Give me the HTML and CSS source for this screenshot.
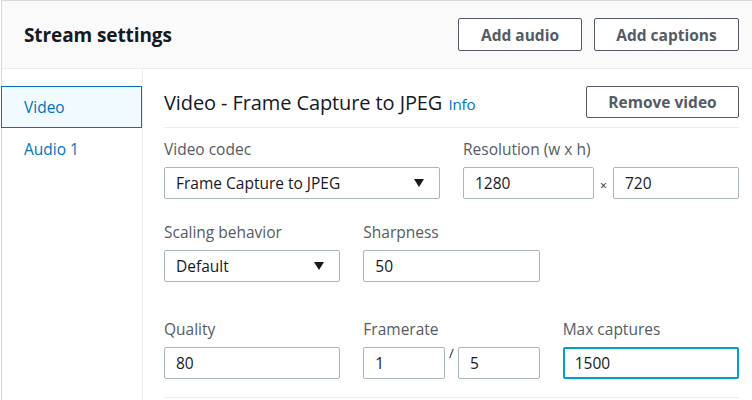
FILE: index.html
```html
<!DOCTYPE html>
<html lang="en">
<head>
<meta charset="utf-8">
<title>Stream settings</title>
<link rel="stylesheet" href="styles.css">
</head>
<body>
<div class="panel">
  <div class="panel-header">
    <h2 class="panel-title">Stream settings</h2>
    <div class="header-actions">
      <button class="btn btn-audio">Add audio</button>
      <button class="btn btn-captions">Add captions</button>
    </div>
  </div>
  <div class="panel-body">
    <nav class="sidebar">
      <div class="tab tab-active">Video</div>
      <div class="tab">Audio 1</div>
    </nav>
    <section class="content">
      <div class="section-head">
        <h3 class="section-title">Video - Frame Capture to JPEG <a class="info">Info</a></h3>
        <button class="btn btn-remove">Remove video</button>
      </div>
      <div class="row row-two">
        <div class="field">
          <label class="label">Video codec</label>
          <div class="control select">
            <span>Frame Capture to JPEG</span>
            <svg class="caret" width="10" height="8" viewBox="0 0 10 8"><polygon points="0,0 10,0 5,8" fill="#16191f"/></svg>
          </div>
        </div>
        <div class="field">
          <label class="label">Resolution (w x h)</label>
          <div class="pair pair-res">
            <div class="control input">1280</div>
            <span class="times">×</span>
            <div class="control input">720</div>
          </div>
        </div>
      </div>
      <div class="row row-three row-mid">
        <div class="field">
          <label class="label">Scaling behavior</label>
          <div class="control select">
            <span>Default</span>
            <svg class="caret" width="10" height="8" viewBox="0 0 10 8"><polygon points="0,0 10,0 5,8" fill="#16191f"/></svg>
          </div>
        </div>
        <div class="field">
          <label class="label">Sharpness</label>
          <div class="control input">50</div>
        </div>
      </div>
      <div class="row row-three row-last">
        <div class="field">
          <label class="label">Quality</label>
          <div class="control input">80</div>
        </div>
        <div class="field">
          <label class="label">Framerate</label>
          <div class="pair pair-rate">
            <div class="control input">1</div>
            <span class="slash">/</span>
            <div class="control input">5</div>
          </div>
        </div>
        <div class="field">
          <label class="label">Max captures</label>
          <div class="control input focused">1500</div>
        </div>
      </div>
    </section>
  </div>
</div>
</body>
</html>
```
FILE: styles.css
```css
* { box-sizing: border-box; }
html, body { margin: 0; padding: 0; background: #ffffff; }
body {
  font-family: "Open Sans", "Noto Sans", sans-serif;
  color: #16191f;
  width: 752px;
  height: 400px;
  overflow: hidden;
}
.panel {
  margin-left: 1px;
  border-top: 1px solid #d5dbdb;
  border-left: 1px solid #d5dbdb;
}
.panel-header {
  height: 68px;
  background: #fafafa;
  border-bottom: 1px solid #eaeded;
  display: flex;
  align-items: center;
  justify-content: space-between;
  padding: 0 13px 0 22px;
}
.panel-title {
  margin: 0;
  font-size: 19px;
  font-weight: 700;
  letter-spacing: -0.1px;
}
.header-actions { display: flex; gap: 12px; }
.btn {
  font-family: inherit;
  background: #ffffff;
  border: 1px solid #545b64;
  border-radius: 2px;
  color: #545b64;
  font-weight: 700;
  font-size: 15.5px;
  height: 33px;
  padding: 0;
}
.btn-audio { width: 124px; }
.btn-captions { width: 145px; }
.btn-remove { width: 153px; height: 32px; }
.panel-body { display: flex; }
.sidebar {
  width: 141px;
  flex: none;
  border-right: 1px solid #eaeded;
  padding-top: 17px;
  min-height: 340px;
}
.tab {
  margin-left: -1px;
  height: 42px;
  display: flex;
  align-items: center;
  padding-left: 22px;
  color: #0073bb;
  font-size: 15.5px;
  border: 1px solid transparent;
}
.tab-active {
  background: #f1faff;
  border-color: #0073bb;
}
.content {
  flex: 1;
  padding: 17px 13px 0 21px;
}
.section-head {
  display: flex;
  align-items: center;
  justify-content: space-between;
  padding-bottom: 9px;
  border-bottom: 1px solid #eaeded;
}
.section-title {
  margin: 0;
  font-size: 20px;
  font-weight: 400;
  letter-spacing: -0.1px;
}
.info {
  color: #0073bb;
  font-size: 15px;
  margin-left: 1px;
}
.row { display: grid; column-gap: 23px; }
.row-two { grid-template-columns: 1fr 1fr; padding-top: 10px; }
.row-three { grid-template-columns: 1fr 1fr 1fr; }
.row-mid { padding-top: 22px; }
.row-last { padding-top: 36px; padding-bottom: 18px; border-bottom: 1px solid #eaeded; }
.field { display: flex; flex-direction: column; }
.label {
  font-size: 15.5px;
  line-height: 22px;
  color: #545b64;
  margin-bottom: 7px;
}
.control {
  height: 32px;
  border: 1px solid #aab7b8;
  border-radius: 2px;
  font-size: 15.5px;
  display: flex;
  align-items: center;
  padding: 0 11px;
  color: #16191f;
}
.select { justify-content: space-between; padding-right: 15px; }
.caret { display: block; }
.pair { display: flex; }
.pair .control { flex: 1; }
.pair-res .control:last-child { flex: none; width: 126px; }
.times {
  width: 19px;
  text-align: center;
  font-size: 12px;
  align-self: center;
  padding-top: 4px;
  color: #16191f;
}
.slash {
  width: 13px;
  text-align: center;
  font-size: 13px;
  line-height: 13px;
  align-self: flex-start;
  color: #16191f;
}
.focused {
  border: 2px solid #00a1c9;
  padding-left: 10px;
}
```
